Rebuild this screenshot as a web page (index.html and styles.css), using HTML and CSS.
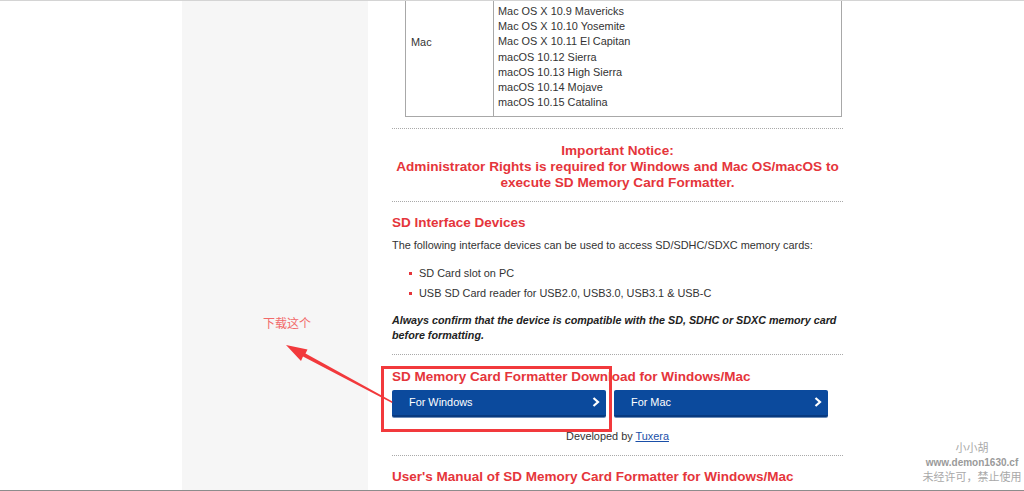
FILE: index.html
```html
<!DOCTYPE html>
<html lang="en">
<head>
<meta charset="utf-8">
<title>SD Memory Card Formatter</title>
<link rel="stylesheet" href="styles.css">
</head>
<body>
<div class="page">
  <div class="gutter"></div>
  <div class="sidebar"></div>
  <main class="main">
    <div class="content">
      <table class="os-table">
        <tr>
          <td class="os-name">Mac</td>
          <td class="os-list">
            <div>Mac OS X 10.9 Mavericks</div>
            <div>Mac OS X 10.10 Yosemite</div>
            <div>Mac OS X 10.11 El Capitan</div>
            <div>macOS 10.12 Sierra</div>
            <div>macOS 10.13 High Sierra</div>
            <div>macOS 10.14 Mojave</div>
            <div>macOS 10.15 Catalina</div>
          </td>
        </tr>
      </table>
      <hr class="sep sep-first">
      <p class="notice">Important Notice:<br>Administrator Rights is required for Windows and Mac OS/macOS to<br>execute SD Memory Card Formatter.</p>
      <hr class="sep">
      <h3 class="heading">SD Interface Devices</h3>
      <p class="text">The following interface devices can be used to access SD/SDHC/SDXC memory cards:</p>
      <ul class="bullets">
        <li>SD Card slot on PC</li>
        <li>USB SD Card reader for USB2.0, USB3.0, USB3.1 &amp; USB-C</li>
      </ul>
      <p class="warn">Always confirm that the device is compatible with the SD, SDHC or SDXC memory card before formatting.</p>
      <hr class="sep">
      <h3 class="heading heading-dl">SD Memory Card Formatter Download for Windows/Mac</h3>
      <div class="buttons">
        <a class="btn" href="#">For Windows<svg class="chev" viewBox="0 0 8 10" width="8" height="10"><polyline points="1.5,1 6,5 1.5,9" fill="none" stroke="#fff" stroke-width="2.2"/></svg></a>
        <a class="btn" href="#">For Mac<svg class="chev" viewBox="0 0 8 10" width="8" height="10"><polyline points="1.5,1 6,5 1.5,9" fill="none" stroke="#fff" stroke-width="2.2"/></svg></a>
      </div>
      <p class="dev">Developed by <a href="#">Tuxera</a></p>
      <hr class="sep">
      <h3 class="heading heading-manual">User's Manual of SD Memory Card Formatter for Windows/Mac</h3>
    </div>
  </main>
</div>

<div class="note">下载这个</div>
<svg class="annot" width="1024" height="491" viewBox="0 0 1024 491">
  <rect x="382.5" y="367.5" width="228" height="63" fill="none" stroke="#f2393c" stroke-width="3"/>
  <polygon points="392,403 303,356.5 301,361 286,345 307.5,349.5 305.5,353.5 392.5,401.5" fill="#f2393c"/>
</svg>

<div class="watermark">
  <div class="wm-name">小小胡</div>
  <div class="wm-url">www.demon1630.cf</div>
  <div class="wm-text">未经许可，禁止使用</div>
</div>
<div class="bottom-line"></div>
</body>
</html>
```

FILE: styles.css
```css
html, body {
  margin: 0;
  padding: 0;
  height: 491px;
  overflow: hidden;
  background: #fff;
  font-family: "Liberation Sans", Arial, sans-serif;
  color: #333;
}

.page {
  display: flex;
  border-top: 1px solid #d4d4d4;
  height: 490px;
  overflow: hidden;
}

.gutter {
  width: 182px;
  flex: none;
  background: #fff;
}

.sidebar {
  width: 186px;
  flex: none;
  background: #f6f6f6;
}

.main {
  flex: 1;
  background: #fff;
}

.content {
  width: 451px;
  padding-left: 24px;
}

.os-table {
  margin-top: -33px;
  margin-left: 13px;
  width: 437px;
  border-collapse: collapse;
  font-size: 10.9px;
  line-height: 15.2px;
  color: #333;
}

.os-table td {
  border: 1px solid #a8a8a8;
  border-top: none;
}

.os-name {
  width: 82px;
  padding: 0 0 0 5px;
  vertical-align: middle;
  border-right: 1px dotted #b0b0b0 !important;
}

.os-list {
  padding: 36px 4px 6px 4px;
  vertical-align: top;
}

.sep {
  border: none;
  border-top: 1px dotted #a9a9a9;
  margin: 0;
  height: 0;
}

.sep-first {
  margin-top: 11px;
}

.notice {
  margin: 14px 0 10px;
  text-align: center;
  color: #e5353b;
  font-weight: bold;
  font-size: 13.6px;
  line-height: 16px;
}

.heading {
  margin: 12px 0 0;
  color: #e5353b;
  font-weight: bold;
  font-size: 13.5px;
  line-height: 18px;
}

.text {
  margin: 5px 0 0;
  font-size: 10.9px;
  line-height: 16px;
}

.bullets {
  list-style: none;
  margin: 10px 0 0;
  padding: 0 0 0 27px;
  font-size: 10.9px;
  line-height: 20px;
}

.bullets li {
  position: relative;
}

.bullets li::before {
  content: "";
  position: absolute;
  left: -10px;
  top: 9px;
  width: 3px;
  height: 3px;
  background: #e5353b;
}

.warn {
  margin: 10px 0 11px;
  font-size: 10.75px;
  line-height: 15px;
  font-weight: bold;
  font-style: italic;
  color: #222;
}

.heading-dl {
  margin-top: 13px;
}

.buttons {
  display: flex;
  gap: 8px;
  margin-top: 4px;
}

.btn {
  width: 214px;
  height: 27px;
  box-sizing: border-box;
  display: flex;
  align-items: center;
  justify-content: space-between;
  padding: 0 6px 1px 17px;
  background: #0b4a9d;
  border-bottom: 2px solid #083a80;
  border-radius: 2px;
  color: #fff;
  text-decoration: none;
  font-size: 10.9px;
  box-shadow: 0 1px 0 #6c8cb8;
}

.chev {
  display: block;
}

.dev {
  margin: 11px 0 11px;
  text-align: center;
  font-size: 10.9px;
  line-height: 16px;
  color: #333;
}

.dev a {
  color: #1a4fa8;
  text-decoration: underline;
}

.heading-manual {
  margin-top: 12px;
}

.note {
  position: absolute;
  left: 263px;
  top: 315px;
  font-family: "Noto Sans CJK SC", sans-serif;
  font-size: 12px;
  line-height: 16px;
  color: #f26a6a;
}

.annot {
  position: absolute;
  left: 0;
  top: 0;
  pointer-events: none;
}

.watermark {
  position: absolute;
  right: 2px;
  top: 440px;
  width: 100px;
  text-align: center;
  font-family: "Noto Sans CJK SC", sans-serif;
  color: #a9a9a9;
  font-size: 11px;
  line-height: 15px;
}

.wm-url {
  font-family: "Liberation Sans", Arial, sans-serif;
  font-weight: bold;
  color: #9a9a9a;
  font-size: 10px;
  line-height: 15px;
}

.wm-text {
  line-height: 13px;
}

.bottom-line {
  position: absolute;
  left: 0;
  right: 0;
  top: 490px;
  height: 1px;
  background: #8c8c8c;
}
```
